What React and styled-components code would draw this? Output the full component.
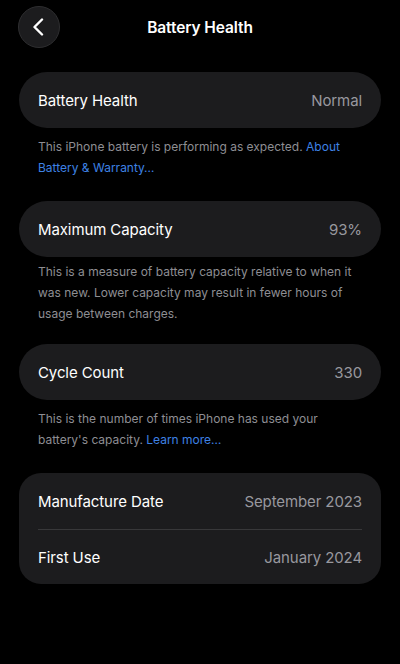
import styled, { createGlobalStyle } from "styled-components";

const GlobalStyle = createGlobalStyle`
  html, body {
    margin: 0;
    padding: 0;
    background: #000;
  }
  body {
    font-family: Inter, "Noto Sans", sans-serif;
    color: #fff;
    -webkit-font-smoothing: antialiased;
  }
`;

const ChevronLeft = () => (
  <svg width="14" height="18" viewBox="0 0 14 18" fill="none">
    <path
      d="M11 1.5L3.5 9L11 16.5"
      stroke="#fff"
      strokeWidth="2.4"
      strokeLinecap="round"
      strokeLinejoin="round"
    />
  </svg>
);

const sections = [
  {
    rows: [{ label: "Battery Health", value: "Normal" }],
    note: "This iPhone battery is performing as expected. ",
    link: "About Battery & Warranty…",
  },
  {
    rows: [{ label: "Maximum Capacity", value: "93%" }],
    note:
      "This is a measure of battery capacity relative to when it was new. Lower capacity may result in fewer hours of usage between charges.",
    tight: true,
  },
  {
    rows: [{ label: "Cycle Count", value: "330" }],
    note: "This is the number of times iPhone has used your battery's capacity. ",
    link: "Learn more…",
  },
  {
    rows: [
      { label: "Manufacture Date", value: "September 2023" },
      { label: "First Use", value: "January 2024" },
    ],
  },
];

export default function App() {
  return (
    <>
      <GlobalStyle />
      <Page>
        <Header>
          <BackButton aria-label="Back">
            <ChevronLeft />
          </BackButton>
          <Title>Battery Health</Title>
        </Header>
        <List>
          {sections.map((s, i) => (
            <Section key={i}>
              <Card $multi={s.rows.length > 1}>
                {s.rows.map((r, j) => (
                  <Row key={j} $divider={j > 0}>
                    <Label>{r.label}</Label>
                    <Value>{r.value}</Value>
                  </Row>
                ))}
              </Card>
              {s.note && (
                <Footnote $tight={s.tight}>
                  {s.note}
                  {s.link && <Link>{s.link}</Link>}
                </Footnote>
              )}
            </Section>
          ))}
        </List>
      </Page>
    </>
  );
}

const Page = styled.div`
  width: 400px;
  min-height: 664px;
  box-sizing: border-box;
  padding: 6px 19px 0;
  background: #000;
`;

const Header = styled.div`
  position: relative;
  height: 42px;
  display: flex;
  align-items: center;
  justify-content: center;
  margin-bottom: 24px;
`;

const BackButton = styled.button`
  position: absolute;
  left: -1px;
  top: 0;
  width: 42px;
  height: 42px;
  border-radius: 50%;
  border: 1px solid #2e2e30;
  background: #1c1c1e;
  display: flex;
  align-items: center;
  justify-content: center;
  padding: 0 2px 0 0;
  cursor: pointer;
`;

const Title = styled.h1`
  margin: 0;
  font-size: 15.5px;
  font-weight: 600;
  color: #fff;
  letter-spacing: -0.1px;
`;

const List = styled.div`
  display: flex;
  flex-direction: column;
  gap: 23px;
`;

const Section = styled.div`
  display: flex;
  flex-direction: column;
`;

const Card = styled.div`
  background: #1c1c1e;
  border-radius: ${(p) => (p.$multi ? "22px" : "28px")};
  padding: 0 19px;
`;

const Row = styled.div`
  height: ${(p) => (p.$divider ? "54px" : "56px")};
  display: flex;
  align-items: center;
  justify-content: space-between;
  border-top: ${(p) => (p.$divider ? "1px solid #38383a" : "none")};
`;

const Label = styled.span`
  font-size: 15px;
  font-weight: 400;
  color: #fff;
  letter-spacing: -0.1px;
`;

const Value = styled.span`
  font-size: 15px;
  color: #98989e;
  letter-spacing: -0.1px;
`;

const Footnote = styled.p`
  margin: ${(p) => (p.$tight ? "4px 0 -3px" : "8px 0 0")};
  padding: 0 19px;
  font-size: 12px;
  line-height: 21px;
  color: #8e8e93;
`;

const Link = styled.span`
  color: #3e82e4;
`;
